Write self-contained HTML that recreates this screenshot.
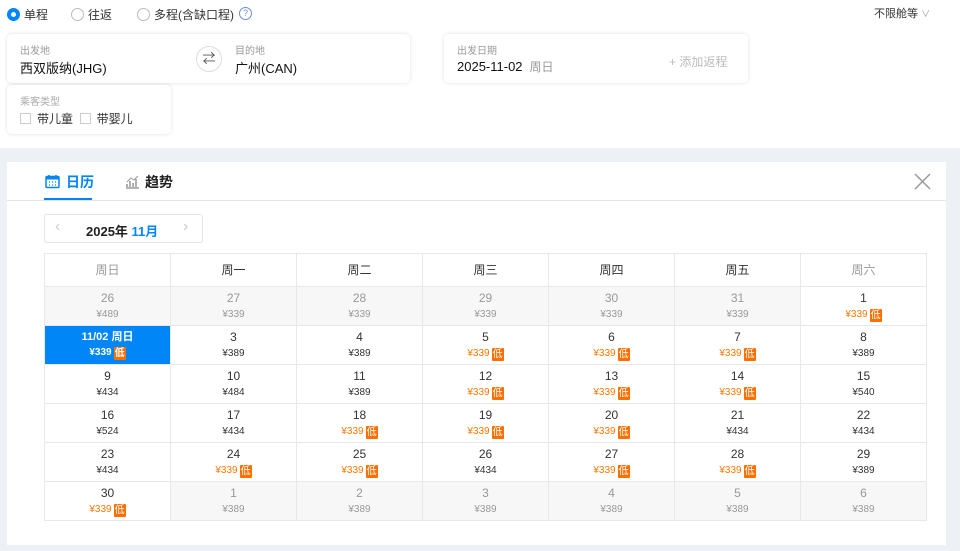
<!DOCTYPE html>
<html><head><meta charset="utf-8"><style>
*{box-sizing:border-box;margin:0;padding:0}
body{width:960px;height:551px;overflow:hidden;background:#fff;font-family:"Liberation Sans","Noto Sans CJK SC",sans-serif;color:#333;position:relative}
.abs{position:absolute}
.radio{display:inline-block;width:13px;height:13px;border:1px solid #bbb;border-radius:50%;vertical-align:-2px;margin-right:4px}
.radio.on{border:4px solid #0086f6}
.top{top:6px;left:7px;font-size:12px;color:#333}
.top span.it{position:absolute;white-space:nowrap}
.card{background:#fff;border-radius:5px;box-shadow:0 0 4px rgba(0,0,0,.12)}
.lbl{font-size:10px;color:#999}
.val{font-size:13px;color:#111}
.grey{position:absolute;left:0;top:148px;width:960px;height:403px;background:#edf0f5}
.panel{position:absolute;left:7px;top:162px;width:939px;height:383px;background:#fff}
table{position:absolute;left:44px;top:253px;border-collapse:collapse;table-layout:fixed}
td,th{border:1px solid #e8e8e8;width:126px;text-align:center;font-size:12px;font-weight:normal;line-height:15px}
th{height:33px;font-size:12px;color:#333}
td{height:39px;color:#333}
td.g{background:#f7f7f7;color:#999}
td .p{font-size:10px}
td .o{color:#ff7700;font-size:10px}
.low{display:inline-block;background:#ff6f00;color:#fff;font-size:10px;font-style:normal;line-height:13px;height:13px;padding:0 1px;border-radius:1px;margin-left:2px;vertical-align:-1px}
td.sel{background:#0086f6;color:#fff;font-weight:bold;font-size:11px}
td.sel .p{color:#fff}
</style></head><body>
<div class="abs top">
<span class="it" style="left:0"><i class="radio on"></i>单程</span>
<span class="it" style="left:64px"><i class="radio"></i>往返</span>
<span class="it" style="left:130px"><i class="radio"></i>多程(含缺口程)</span>
<span class="it" style="left:232px;top:1px;width:13px;height:13px;border:1px solid #6a8fd0;border-radius:50%;font-size:9px;line-height:11px;text-align:center;color:#6a8fd0">?</span>
</div>
<div class="abs" style="left:874px;top:5px;font-size:11px;color:#333">不限舱等 <span style="color:#999;font-size:9px">∨</span></div>

<div class="abs card" style="left:7px;top:34px;width:403px;height:49px">
<div class="abs lbl" style="left:13px;top:8px">出发地</div>
<div class="abs val" style="left:13px;top:24px">西双版纳(JHG)</div>
<div class="abs" style="left:189px;top:12px;width:26px;height:26px;border:1px solid #ddd;border-radius:50%;text-align:center;font-size:13px;line-height:24px;color:#555">⇄</div>
<div class="abs lbl" style="left:228px;top:8px">目的地</div>
<div class="abs val" style="left:228px;top:24px">广州(CAN)</div>
</div>
<div class="abs card" style="left:444px;top:34px;width:304px;height:49px">
<div class="abs lbl" style="left:13px;top:8px">出发日期</div>
<div class="abs val" style="left:13px;top:24px">2025-11-02 <span style="color:#999;font-size:12px">&nbsp;周日</span></div>
<div class="abs" style="left:225px;top:19px;font-size:12px;color:#bbb">+ 添加返程</div>
</div>
<div class="abs card" style="left:7px;top:85px;width:164px;height:49px">
<div class="abs lbl" style="left:13px;top:8px;color:#aaa">乘客类型</div>
<div class="abs" style="left:13px;top:25px;font-size:12px;white-space:nowrap"><i style="display:inline-block;width:11px;height:11px;border:1px solid #ccc;vertical-align:-1px;margin-right:6px"></i>带儿童 &nbsp;<i style="display:inline-block;width:11px;height:11px;border:1px solid #ccc;vertical-align:-1px;margin-right:6px"></i>带婴儿</div>
</div>

<div class="grey"></div>
<div class="panel"></div>
<div class="abs" style="left:7px;top:200px;width:939px;height:1px;background:#e4e4e4"></div>
<div class="abs" style="left:44px;top:198px;width:48px;height:2px;background:#0086f6"></div>
<svg class="abs" style="left:45px;top:174px" width="15" height="15" viewBox="0 0 15 15"><rect x="1" y="2.5" width="13" height="11" rx="1" fill="none" stroke="#0086f6" stroke-width="1.5"/><rect x="1" y="2.5" width="13" height="3" fill="#0086f6"/><path d="M4 1v3M11 1v3" stroke="#0086f6" stroke-width="1.5"/><path d="M4 8h1M7 8h1M10 8h1M4 11h1M7 11h1M10 11h1" stroke="#0086f6" stroke-width="1.3"/></svg>
<div class="abs" style="left:66px;top:172px;font-size:14px;font-weight:bold;color:#0086f6">日历</div>
<svg class="abs" style="left:125px;top:174px" width="15" height="15" viewBox="0 0 15 15"><path d="M1 14h13M2 13v-3M5 13V7M8 13V9M11 13V5" stroke="#999" stroke-width="1.5"/><path d="M2 8l4-4 3 2 4-4" stroke="#999" stroke-width="1" fill="none"/></svg>
<div class="abs" style="left:145px;top:172px;font-size:14px;font-weight:bold;color:#222">趋势</div>
<svg class="abs" style="left:914px;top:173px" width="17" height="17" viewBox="0 0 17 17"><path d="M1 1l15 15M16 1L1 16" stroke="#999" stroke-width="1.5"/></svg>

<div class="abs" style="left:44px;top:214px;width:159px;height:29px;border:1px solid #e4e4e4;border-radius:3px">
<span class="abs" style="left:10px;top:3px;color:#ccc;font-size:16px">‹</span>
<span class="abs" style="left:41px;top:6px;font-size:13px;font-weight:bold;color:#222;white-space:nowrap">2025年 <span style="color:#0086f6">11月</span></span>
<span class="abs" style="left:138px;top:3px;color:#ccc;font-size:16px">›</span>
</div>

<table>
<tr><th style="color:#999">周日</th><th>周一</th><th>周二</th><th>周三</th><th>周四</th><th>周五</th><th style="color:#999">周六</th></tr>
<tr><td class="g">26<br><span class="p">¥489</span></td><td class="g">27<br><span class="p">¥339</span></td><td class="g">28<br><span class="p">¥339</span></td><td class="g">29<br><span class="p">¥339</span></td><td class="g">30<br><span class="p">¥339</span></td><td class="g">31<br><span class="p">¥339</span></td><td>1<br><span class="o">¥339<i class="low">低</i></span></td></tr>
<tr><td class="sel">11/02 周日<br><span class="p">¥339<i class="low">低</i></span></td><td>3<br><span class="p">¥389</span></td><td>4<br><span class="p">¥389</span></td><td>5<br><span class="o">¥339<i class="low">低</i></span></td><td>6<br><span class="o">¥339<i class="low">低</i></span></td><td>7<br><span class="o">¥339<i class="low">低</i></span></td><td>8<br><span class="p">¥389</span></td></tr>
<tr><td>9<br><span class="p">¥434</span></td><td>10<br><span class="p">¥484</span></td><td>11<br><span class="p">¥389</span></td><td>12<br><span class="o">¥339<i class="low">低</i></span></td><td>13<br><span class="o">¥339<i class="low">低</i></span></td><td>14<br><span class="o">¥339<i class="low">低</i></span></td><td>15<br><span class="p">¥540</span></td></tr>
<tr><td>16<br><span class="p">¥524</span></td><td>17<br><span class="p">¥434</span></td><td>18<br><span class="o">¥339<i class="low">低</i></span></td><td>19<br><span class="o">¥339<i class="low">低</i></span></td><td>20<br><span class="o">¥339<i class="low">低</i></span></td><td>21<br><span class="p">¥434</span></td><td>22<br><span class="p">¥434</span></td></tr>
<tr><td>23<br><span class="p">¥434</span></td><td>24<br><span class="o">¥339<i class="low">低</i></span></td><td>25<br><span class="o">¥339<i class="low">低</i></span></td><td>26<br><span class="p">¥434</span></td><td>27<br><span class="o">¥339<i class="low">低</i></span></td><td>28<br><span class="o">¥339<i class="low">低</i></span></td><td>29<br><span class="p">¥389</span></td></tr>
<tr><td>30<br><span class="o">¥339<i class="low">低</i></span></td><td class="g">1<br><span class="p">¥389</span></td><td class="g">2<br><span class="p">¥389</span></td><td class="g">3<br><span class="p">¥389</span></td><td class="g">4<br><span class="p">¥389</span></td><td class="g">5<br><span class="p">¥389</span></td><td class="g">6<br><span class="p">¥389</span></td></tr>
</table>
</body></html>
